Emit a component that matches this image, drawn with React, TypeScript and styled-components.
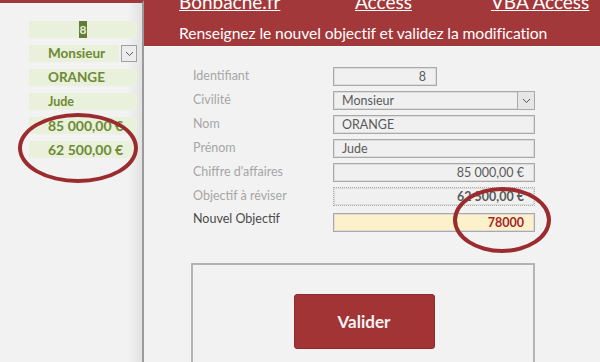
import React from "react";
import styled, { createGlobalStyle } from "styled-components";

const GlobalStyle = createGlobalStyle`
  html, body {
    margin: 0;
    padding: 0;
    background: #f2f2f2;
  }
  body {
    font-family: Lato, "Noto Sans", sans-serif;
    overflow: hidden;
  }
`;

const RED = "#a2383a";

const Screen = styled.div`
  position: relative;
  width: 600px;
  height: 362px;
  display: flex;
  overflow: hidden;
  background: #f2f2f2;
`;

const LeftPane = styled.div`
  width: 144px;
  flex: none;
  box-sizing: border-box;
  border-top: 3px solid ${RED};
  border-right: 2px solid #9a9a9a;
  background: linear-gradient(to right, #f2f2f2 90%, #e2e2e2 100%);
  padding: 18px 5px 0 29px;
  display: flex;
  flex-direction: column;
  gap: 7px;
`;

const MiniRow = styled.div`
  display: flex;
  gap: 2px;
  height: 17px;
  flex: none;
`;

const MiniField = styled.div<{ $center?: boolean; $size?: number }>`
  flex: 1;
  background: #e9f0dc;
  color: #6d8a33;
  font-weight: 700;
  font-size: ${(p) => p.$size ?? 13}px;
  line-height: 17px;
  padding-left: ${(p) => (p.$center ? 0 : 19)}px;
  display: flex;
  justify-content: ${(p) => (p.$center ? "center" : "flex-start")};
  white-space: nowrap;
`;

const Selected = styled.span`
  background: #627d33;
  color: #e9f0dc;
  padding: 0 1px;
  font-size: 12px;
`;

const DropBtn = styled.div<{ $w: number }>`
  width: ${(p) => p.$w}px;
  flex: none;
  box-sizing: border-box;
  border: 1px solid #a0a0a0;
  background: #ececec;
  display: flex;
  align-items: center;
  justify-content: center;
`;

const RightPane = styled.div`
  flex: 1;
  display: flex;
  flex-direction: column;
`;

const Header = styled.div`
  flex: none;
  background: ${RED};
  height: 46px;
  border-bottom: 1px solid #f8f8f8;
  padding-left: 35px;
  color: #ffffff;
  overflow: hidden;
`;

const Links = styled.div`
  display: flex;
  margin-top: -10px;
  height: 25px;
`;

const Link = styled.a<{ $w: number }>`
  width: ${(p) => p.$w}px;
  font-size: 19px;
  line-height: 23px;
  color: #ffffff;
  text-decoration: underline;
  text-underline-offset: 1px;
  white-space: nowrap;
`;

const Subtitle = styled.div`
  font-size: 15.7px;
  line-height: 18px;
  margin-top: 9px;
  letter-spacing: -0.1px;
`;

const Form = styled.div`
  flex: none;
  padding: 20px 0 0 49px;
  display: grid;
  grid-template-columns: 140px 202px;
  row-gap: 5px;
  align-items: center;
`;

const Label = styled.div<{ $strong?: boolean }>`
  font-size: 12.5px;
  color: ${(p) => (p.$strong ? "#4a4a4a" : "#a6a6a6")};
  padding-bottom: ${(p) => (p.$strong ? 6 : 2)}px;
`;

const Field = styled.div<{
  $w?: number;
  $right?: boolean;
  $bold?: boolean;
  $hl?: boolean;
  $dotted?: boolean;
  $gap?: number;
}>`
  box-sizing: border-box;
  width: ${(p) => (p.$w ? `${p.$w}px` : "100%")};
  height: 19px;
  margin-top: ${(p) => p.$gap ?? 0}px;
  border: 1px ${(p) => (p.$dotted ? "dotted" : "solid")} #a9a9a9;
  box-shadow: inset 0 0 0 1px #dcdcdc;
  background: ${(p) => (p.$hl ? "#fdf1cb" : "#f0f0f0")};
  color: ${(p) => (p.$hl ? "#a3262a" : "#5a5a5a")};
  font-weight: ${(p) => (p.$bold ? 700 : 400)};
  font-size: 12.5px;
  line-height: 17px;
  padding: 0 10px 0 8px;
  display: flex;
  justify-content: ${(p) => (p.$right ? "flex-end" : "space-between")};
  white-space: nowrap;
`;

const FieldBtn = styled.div`
  width: 16px;
  margin-right: -10px;
  border-left: 1px solid #a9a9a9;
  background: #e6e6e6;
  display: flex;
  align-items: center;
  justify-content: center;
`;

const ActionBox = styled.div`
  flex: none;
  margin: 31px 0 0 47px;
  width: 344px;
  height: 120px;
  box-sizing: border-box;
  border: 2px solid #b4b4b4;
  border-bottom: none;
  padding-top: 29px;
  display: flex;
  justify-content: center;
`;

const SubmitButton = styled.button`
  width: 141px;
  height: 55px;
  margin-left: 2px;
  background: #a23435;
  border: 1px solid #8e2a2b;
  border-radius: 3px;
  color: #f4f4f4;
  font-family: Lato, "Noto Sans", sans-serif;
  font-weight: 700;
  font-size: 17px;
  cursor: pointer;
`;

const Ring = styled.div<{ $x: number; $y: number; $w: number; $h: number }>`
  position: absolute;
  left: ${(p) => p.$x}px;
  top: ${(p) => p.$y}px;
  width: ${(p) => p.$w}px;
  height: ${(p) => p.$h}px;
  box-sizing: border-box;
  border: 4px solid #9b2b2e;
  border-radius: 50%;
  pointer-events: none;
`;

const Chevron = () => (
  <svg width="9" height="6" viewBox="0 0 9 6">
    <path d="M1 1 L4.5 4.5 L8 1" fill="none" stroke="#555" strokeWidth="1" />
  </svg>
);

const rows = [
  { label: "Identifiant", value: "8", right: true, w: 104 },
  { label: "Civilité", value: "Monsieur", drop: true },
  { label: "Nom", value: "ORANGE" },
  { label: "Prénom", value: "Jude" },
  { label: "Chiffre d'affaires", value: "85 000,00 €", right: true },
  { label: "Objectif à réviser", value: "62 500,00 €", right: true, bold: true, dotted: true },
];

export default function App() {
  return (
    <>
      <GlobalStyle />
      <Screen>
        <LeftPane>
          <MiniRow>
            <MiniField $center>
              <Selected>8</Selected>
            </MiniField>
          </MiniRow>
          <MiniRow>
            <MiniField $size={13.5}>Monsieur</MiniField>
            <DropBtn $w={16}>
              <Chevron />
            </DropBtn>
          </MiniRow>
          <MiniRow>
            <MiniField $size={13.5}>ORANGE</MiniField>
          </MiniRow>
          <MiniRow>
            <MiniField $size={12.5}>Jude</MiniField>
          </MiniRow>
          <MiniRow>
            <MiniField $size={14}>85 000,00 €</MiniField>
          </MiniRow>
          <MiniRow>
            <MiniField $size={14}>62 500,00 €</MiniField>
          </MiniRow>
        </LeftPane>
        <RightPane>
          <Header>
            <Links>
              <Link $w={176}>Bonbache.fr</Link>
              <Link $w={136}>Access</Link>
              <Link $w={100}>VBA Access</Link>
            </Links>
            <Subtitle>Renseignez le nouvel objectif et validez la modification</Subtitle>
          </Header>
          <Form>
            {rows.map((r) => (
              <React.Fragment key={r.label}>
                <Label>{r.label}</Label>
                <Field $w={r.w} $right={r.right} $bold={r.bold} $dotted={r.dotted}>
                  <span>{r.value}</span>
                  {r.drop && (
                    <FieldBtn>
                      <Chevron />
                    </FieldBtn>
                  )}
                </Field>
              </React.Fragment>
            ))}
            <Label $strong>Nouvel Objectif</Label>
            <Field $right $bold $hl $gap={2}>
              <span>78000</span>
            </Field>
          </Form>
          <ActionBox>
            <SubmitButton>Valider</SubmitButton>
          </ActionBox>
        </RightPane>
        <Ring $x={18} $y={113} $w={120} $h={70} />
        <Ring $x={453} $y={187} $w={98} $h={66} />
      </Screen>
    </>
  );
}
